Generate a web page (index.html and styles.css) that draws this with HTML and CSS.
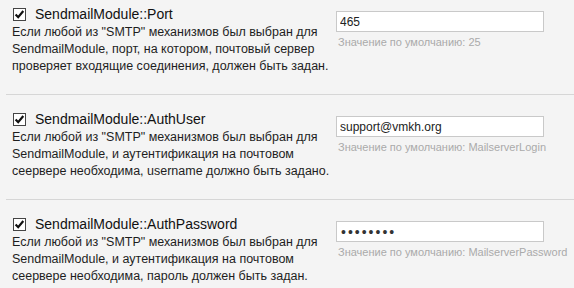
FILE: index.html
```html
<!DOCTYPE html>
<html lang="ru">
  <head>
    <meta charset="utf-8">
    <title>SendmailModule</title>
    <link rel="stylesheet" href="styles.css">
  </head>
  <body>
    <div class="Settings-List">
      <div class="Setting-Row">
        <div class="Setting-Info">
          <label class="Setting-Title">
            <svg class="Check-Box" width="13" height="13" viewBox="0 0 13 13"><rect x="0.5" y="0.5" width="12" height="12" fill="#fff" stroke="#444"/><path d="M2.6 6.4 L5.2 9.2 L10.3 3" fill="none" stroke="#111" stroke-width="2.2"/></svg>
            SendmailModule::Port
          </label>
          <div class="Setting-Desc">Если любой из "SMTP" механизмов был выбран для SendmailModule, порт, на котором, почтовый сервер проверяет входящие соединения, должен быть задан.</div>
        </div>
        <div class="Setting-Value">
          <input type="text" value="465">
          <div class="Setting-Default">Значение по умолчанию: 25</div>
        </div>
      </div>
      <div class="Setting-Row">
        <div class="Setting-Info">
          <label class="Setting-Title">
            <svg class="Check-Box" width="13" height="13" viewBox="0 0 13 13"><rect x="0.5" y="0.5" width="12" height="12" fill="#fff" stroke="#444"/><path d="M2.6 6.4 L5.2 9.2 L10.3 3" fill="none" stroke="#111" stroke-width="2.2"/></svg>
            SendmailModule::AuthUser
          </label>
          <div class="Setting-Desc">Если любой из "SMTP" механизмов был выбран для SendmailModule, и аутентификация на почтовом сеервере необходима, username должно быть задано.</div>
        </div>
        <div class="Setting-Value">
          <input type="text" value="support@vmkh.org">
          <div class="Setting-Default">Значение по умолчанию: MailserverLogin</div>
        </div>
      </div>
      <div class="Setting-Row">
        <div class="Setting-Info">
          <label class="Setting-Title">
            <svg class="Check-Box" width="13" height="13" viewBox="0 0 13 13"><rect x="0.5" y="0.5" width="12" height="12" fill="#fff" stroke="#444"/><path d="M2.6 6.4 L5.2 9.2 L10.3 3" fill="none" stroke="#111" stroke-width="2.2"/></svg>
            SendmailModule::AuthPassword
          </label>
          <div class="Setting-Desc">Если любой из "SMTP" механизмов был выбран для SendmailModule, и аутентификация на почтовом сеервере необходима, пароль должен быть задан.</div>
        </div>
        <div class="Setting-Value">
          <input type="password" value="12345678">
          <div class="Setting-Default">Значение по умолчанию: MailserverPassword</div>
        </div>
      </div>
    </div>
  </body>
</html>
```

FILE: styles.css
```css
body {
  margin: 0;
  background: #f4f4f4;
  font-family: 'Liberation Sans', Arial, sans-serif;
  color: #222;
  overflow: hidden;
}

.Settings-List {
  margin-left: 6px;
}

.Setting-Row {
  display: flex;
  padding: 14px 0 19px 6px;
  border-bottom: 1px solid #d6d6d6;
}

.Setting-Row:first-child {
  padding-top: 4px;
}

.Setting-Info {
  flex-shrink: 0;
  width: 318px;
  margin-right: 6px;
}

.Setting-Title {
  display: flex;
  align-items: center;
  height: 20px;
  font-size: 14px;
  color: #111;
}

.Check-Box {
  margin: 0 9px 0 1px;
  flex-shrink: 0;
}

.Setting-Desc {
  font-size: 12.5px;
  line-height: 17px;
  color: #1e1e1e;
}

.Setting-Value {
  flex-shrink: 0;
  width: 208px;
  padding-top: 7px;
}

.Setting-Value input {
  box-sizing: border-box;
  width: 208px;
  height: 21px;
  margin: 0;
  padding: 0 3px;
  border: 1px solid #c9c9c9;
  background: #fff;
  font-family: 'Liberation Sans', Arial, sans-serif;
  font-size: 12px;
  color: #222;
  outline: none;
}

.Setting-Value input[type="password"] {
  padding-left: 4px;
  font-size: 14px;
  letter-spacing: 2px;
  color: #333;
}

.Setting-Default {
  margin-top: 2px;
  padding-left: 2px;
  font-size: 11px;
  line-height: 17px;
  color: #aaa;
  white-space: nowrap;
}
```
